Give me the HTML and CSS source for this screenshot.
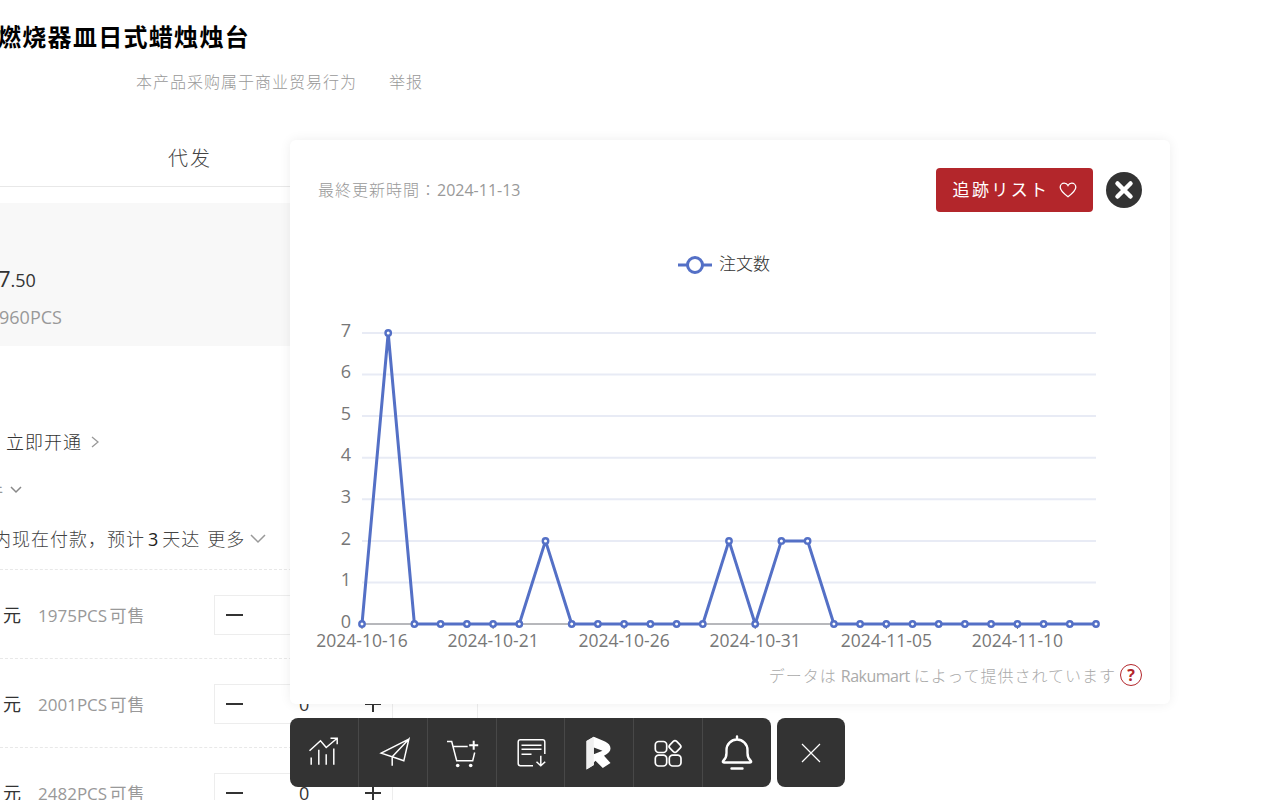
FILE: index.html
```html
<!DOCTYPE html>
<html lang="zh">
<head>
<meta charset="utf-8">
<title>商品详情</title>
<link rel="stylesheet" href="styles.css">
</head>
<body>
<main class="page">
  <h1 class="title">燃烧器皿日式蜡烛烛台</h1>
  <div class="meta"><span>本产品采购属于商业贸易行为</span><span>举报</span></div>
  <div class="tabs"><span>代发</span></div>
  <div class="price-panel">
    <div class="price">7<small>.50</small></div>
    <div class="moq">960PCS</div>
  </div>
  <div class="open-row"><span>立即开通</span><svg class="chev-r" viewBox="0 0 8 12"><path d="M1 1l6 5-6 5"/></svg></div>
  <div class="ship-row"><span class="ship-text">件</span><svg class="chev-d" viewBox="0 0 12 8"><path d="M1 1l5 5 5-5"/></svg></div>
  <div class="pay-row"><span>内现在付款，预计</span><span class="num">3</span><span>天达</span><span class="more">更多</span><svg class="chev-big" viewBox="0 0 16 10"><path d="M1 1l7 7 7-7"/></svg></div>
  <div class="sku-row">
    <span class="unit">元</span><span class="stock">1975PCS <i>可售</i></span>
    <div class="stepper"><span class="minus"></span><span class="qty">0</span><span class="plus"></span></div>
    <div class="cell"></div><div class="cell short"></div>
  </div>
  <div class="sku-row">
    <span class="unit">元</span><span class="stock">2001PCS <i>可售</i></span>
    <div class="stepper"><span class="minus"></span><span class="qty">0</span><span class="plus"></span></div>
    <div class="cell"></div><div class="cell short"></div>
  </div>
  <div class="sku-row">
    <span class="unit">元</span><span class="stock">2482PCS <i>可售</i></span>
    <div class="stepper"><span class="minus"></span><span class="qty">0</span><span class="plus"></span></div>
  </div>
</main>

<section class="modal" lang="ja">
  <header class="modal-head">
    <span class="updated"><i>最終更新時間：</i>2024-11-13</span>
    <button class="track"><span>追跡リスト</span><svg viewBox="0 0 18 16"><path d="M9 14.800C4 11 1.200 8.600 1.200 5.300 1.200 3 3 1.200 5.200 1.200 6.800 1.200 8.200 2 9 3.500 9.800 2 11.200 1.200 12.800 1.200 15 1.200 16.800 3 16.800 5.300 16.800 8.600 14 11 9 14.800Z"/></svg></button>
    <span class="close"><svg viewBox="0 0 36 36"><path d="M11.500 11.500l13 13M24.500 11.500l-13 13"/></svg></span>
  </header>
  <svg class="chart" viewBox="0 0 880 420">
    <path class="legend-line" d="M388 25h34"/>
    <circle class="legend-dot" cx="405" cy="25" r="7.500"/>
    <text x="429" y="30" class="legend-text">注文数</text>
    <path class="grid" d="M72 93H806M72 134.600H806M72 176.100H806M72 217.700H806M72 259.300H806M72 300.900H806M72 342.400H806"/>
    <path class="axis" d="M72 384H806M72 384v5M203.100 384v5M334.100 384v5M465.200 384v5M596.300 384v5M727.400 384v5"/>
    <g class="ylabels">
      <text x="61" y="97">7</text><text x="61" y="138">6</text><text x="61" y="180">5</text><text x="61" y="221">4</text><text x="61" y="263">3</text><text x="61" y="305">2</text><text x="61" y="346">1</text><text x="61" y="388">0</text>
    </g>
    <g class="xlabels">
      <text x="72" y="407">2024-10-16</text><text x="203.100" y="407">2024-10-21</text><text x="334.100" y="407">2024-10-26</text><text x="465.200" y="407">2024-10-31</text><text x="596.300" y="407">2024-11-05</text><text x="727.400" y="407">2024-11-10</text>
    </g>
    <polyline class="series" points="72,384 98.200,93 124.400,384 150.600,384 176.900,384 203.100,384 229.300,384 255.500,300.900 281.700,384 307.900,384 334.100,384 360.400,384 386.600,384 412.800,384 439,300.900 465.200,384 491.400,300.900 517.600,300.900 543.900,384 570.100,384 596.300,384 622.500,384 648.700,384 674.900,384 701.100,384 727.400,384 753.600,384 779.800,384 806,384"/>
    <g class="dots">
      <circle cx="72" cy="384" r="2.700"/><circle cx="98.200" cy="93" r="2.700"/><circle cx="124.400" cy="384" r="2.700"/><circle cx="150.600" cy="384" r="2.700"/><circle cx="176.900" cy="384" r="2.700"/><circle cx="203.100" cy="384" r="2.700"/><circle cx="229.300" cy="384" r="2.700"/><circle cx="255.500" cy="300.900" r="2.700"/><circle cx="281.700" cy="384" r="2.700"/><circle cx="307.900" cy="384" r="2.700"/><circle cx="334.100" cy="384" r="2.700"/><circle cx="360.400" cy="384" r="2.700"/><circle cx="386.600" cy="384" r="2.700"/><circle cx="412.800" cy="384" r="2.700"/><circle cx="439" cy="300.900" r="2.700"/><circle cx="465.200" cy="384" r="2.700"/><circle cx="491.400" cy="300.900" r="2.700"/><circle cx="517.600" cy="300.900" r="2.700"/><circle cx="543.900" cy="384" r="2.700"/><circle cx="570.100" cy="384" r="2.700"/><circle cx="596.300" cy="384" r="2.700"/><circle cx="622.500" cy="384" r="2.700"/><circle cx="648.700" cy="384" r="2.700"/><circle cx="674.900" cy="384" r="2.700"/><circle cx="701.100" cy="384" r="2.700"/><circle cx="727.400" cy="384" r="2.700"/><circle cx="753.600" cy="384" r="2.700"/><circle cx="779.800" cy="384" r="2.700"/><circle cx="806" cy="384" r="2.700"/>
    </g>
  </svg>
  <footer class="modal-foot"><span>データは<b>Rakumart</b>によって提供されています</span><span class="help">?</span></footer>
</section>

<nav class="dock">
  <div class="dock-main">
    <a class="dock-item"><svg viewBox="0 0 40 40"><path d="M5.500 17.800L16.500 7.800 22.200 14.500 33.200 5.200M26.500 5.200H33.200V11.200M7.200 24.500V31.800M14.800 16.800V31.800M22.200 21.200V31.800M29.800 15.500V31.800"/></svg></a>
    <a class="dock-item"><svg viewBox="0 0 40 40"><path d="M35.800 6.200L8.200 20.200 19.200 23.800V32.800M19.200 23.800L35.800 6.200 30.800 27.800 19.200 23.800"/></svg></a>
    <a class="dock-item"><svg viewBox="0 0 40 40"><path d="M5 8.500H9.700L14.700 27.800H30.700L32.700 19.500M10.700 13.500H25.700"/><path class="bold" d="M31.700 7.700V16.700M27.200 12.200H36.200"/><circle class="fill" cx="15.700" cy="32.500" r="1.800"/><circle class="fill" cx="28.700" cy="32.500" r="1.800"/></svg></a>
    <a class="dock-item"><svg viewBox="0 0 40 40"><path d="M33.800 21V9a2.200 2.200 0 0 0-2.200-2.200H9.400A2.200 2.200 0 0 0 7.200 9V30.600a2.200 2.200 0 0 0 2.200 2.200H22M10.500 12.200H30.500M10.500 16.200H30.500M10.500 21.200H20.500M29.800 22.800V32.800M25.500 28.800L29.800 32.800 34.200 28.800"/></svg></a>
    <a class="dock-item"><svg viewBox="0 0 40 40"><path class="logo" fill-rule="evenodd" d="M7.500 8L14.800 3.800 26 8.500Q31.500 11 31.500 15.500 31.500 19.500 25 22.800L31.500 30 23.800 35 16.500 27.800 14.800 29.500V32L7.500 36.500ZM14.800 14.500V21.200L23.500 17.800Z"/><path class="logo-side" d="M7.500 8L14.800 3.800V32L7.500 36.500Z"/></svg></a>
    <a class="dock-item"><svg class="apps" viewBox="0 0 40 40"><rect x="7.300" y="8.500" width="11.400" height="11" rx="3.400"/><rect x="22.200" y="8.700" width="9.600" height="9.600" rx="2.400" transform="rotate(45 27 13.500)"/><rect x="7.300" y="22.200" width="11.400" height="10.800" rx="3.400"/><rect x="21.300" y="22.200" width="11.700" height="10.800" rx="3.400"/></svg></a>
    <a class="dock-item"><svg class="bell" viewBox="0 0 40 40"><path d="M20 3.500V6.500M6.500 27.500C8.800 25.500 9.500 23 9.500 20V17A10.500 10.500 0 0 1 30.500 17V20C30.500 23 31.200 25.500 33.500 27.500Q35 29.500 33 29.500H7Q5 29.500 6.500 27.500ZM14.500 35.500H25.500"/></svg></a>
  </div>
  <a class="dock-close"><svg viewBox="0 0 20 20"><path d="M1 1L19 19M19 1L1 19"/></svg></a>
</nav>
</body>
</html>
```
FILE: styles.css
```css
html, body { margin: 0; padding: 0; }
body { width: 1280px; height: 800px; overflow: hidden; position: relative; background: #fff; font-family: "Open Sans", "Noto Sans CJK SC", sans-serif; color: #333; }
i { font-style: normal; }

.page { width: 546px; height: 800px; overflow: hidden; }
.title { margin: 20px 0 0 -3px; font-size: 24px; line-height: 34px; font-weight: 700; letter-spacing: 1.300px; color: #000; white-space: nowrap; }
.meta { margin: 16px 0 0 136px; display: flex; gap: 32px; font-size: 16px; line-height: 24px; letter-spacing: 1px; color: #999; font-weight: 300; }
.tabs { margin-top: 36px; height: 56px; line-height: 58px; padding-left: 168px; border-bottom: 1px solid #e8e8e8; font-size: 20px; letter-spacing: 2px; color: #444; font-weight: 300; }
.price-panel { margin-top: 16px; height: 143px; box-sizing: border-box; padding-top: 60px; background: #f8f8f8; }
.price { margin-left: -2px; font-size: 22px; line-height: 30px; color: #333; }
.price small { font-size: 18px; }
.moq { margin: 10px 0 0 -1px; font-size: 18px; line-height: 24px; color: #999; }
.open-row { margin: 84px 0 0 6px; display: flex; align-items: center; gap: 9px; font-size: 18px; line-height: 24px; letter-spacing: 1px; color: #333; font-weight: 300; }
.chev-r { width: 8px; height: 12px; fill: none; stroke: #999; stroke-width: 1.300; }
.ship-row { margin-top: 24px; height: 24px; display: flex; align-items: center; gap: 7px; font-size: 16px; color: #999; }
.ship-text { margin-left: -13px; }
.chev-d { width: 12px; height: 8px; fill: none; stroke: #888; stroke-width: 1.500; }
.pay-row { margin: 25px 0 0 -7px; display: flex; align-items: center; font-size: 18px; line-height: 24px; letter-spacing: 1px; color: #444; font-weight: 300; white-space: nowrap; }
.num { margin: 0 3px 0 3px; font-weight: 400; color: #222; }
.more { margin-left: 7px; }
.chev-big { width: 16px; height: 10px; margin-left: 5px; fill: none; stroke: #999; stroke-width: 1.500; }

.sku-row { display: flex; align-items: center; box-sizing: border-box; height: 89px; padding-top: 2px; border-top: 1px dashed #e8e8e8; }
.pay-row + .sku-row { margin-top: 18px; }
.unit { width: 38px; padding: 0 0 2px 3px; box-sizing: border-box; font-size: 18px; color: #333; flex: none; }
.stock { width: 176px; padding-bottom: 2px; flex: none; font-size: 17px; color: #999; white-space: nowrap; }
.stock i { letter-spacing: 1px; margin-left: -2px; }
.stepper { width: 179px; height: 40px; flex: none; box-sizing: border-box; border: 1px solid #ededed; display: flex; align-items: center; }
.minus { width: 17px; height: 2px; background: #333; margin-left: 11px; flex: none; }
.qty { width: 0; flex: none; margin-left: 56px; font-size: 18px; color: #333; }
.plus { width: 16px; height: 16px; margin-left: 66px; flex: none; background: linear-gradient(#333, #333) center / 16px 2px no-repeat, linear-gradient(#333, #333) center / 2px 16px no-repeat; }
.cell { width: 85px; height: 40px; flex: none; box-sizing: border-box; border-right: 1px solid #ededed; }
.cell.short { width: 69px; }

.modal { position: absolute; left: 290px; top: 140px; width: 880px; height: 564px; background: #fff; border-radius: 6px; box-shadow: 0 0 12px rgba(0, 0, 0, .07); font-family: "Open Sans", "Noto Sans CJK JP", sans-serif; }
.modal-head { display: flex; align-items: center; padding: 28px 28px 0; height: 44px; }
.updated { flex: 1; padding-bottom: 2px; font-size: 16px; color: #999; }
.updated i { letter-spacing: 1px; font-weight: 300; }
.track { width: 157px; height: 44px; border: 0; padding: 0 0 3px; border-radius: 4px; background: #b3262b; color: #fff; display: flex; align-items: center; justify-content: center; gap: 9px; font-family: inherit; font-size: 17px; letter-spacing: 2.400px; }
.track svg { width: 18px; height: 16px; margin-top: 3px; fill: none; stroke: #fff; stroke-width: 1.300; }
.close { width: 36px; height: 36px; margin-left: 13px; border-radius: 50%; background: #333; display: block; }
.close svg { display: block; width: 36px; height: 36px; fill: none; stroke: #fff; stroke-width: 4.500; stroke-linecap: round; }

.chart { display: block; width: 880px; height: 420px; margin-top: 28px; }
.legend-line { stroke: #5470c6; stroke-width: 3; fill: none; }
.legend-dot { fill: #fff; stroke: #5470c6; stroke-width: 3; }
.legend-text { font-size: 17px; fill: #333; font-weight: 300; }
.grid { stroke: #e8ebf5; stroke-width: 2; fill: none; }
.axis { stroke: #6e7079; stroke-width: 1; fill: none; }
.ylabels text { font-size: 18px; fill: #777; text-anchor: end; }
.xlabels text { font-size: 17.500px; fill: #777; text-anchor: middle; }
.series { fill: none; stroke: #5470c6; stroke-width: 3; stroke-linejoin: round; }
.dots circle { fill: #fff; stroke: #5470c6; stroke-width: 2.400; }

.modal-foot { display: flex; justify-content: flex-end; align-items: center; gap: 4px; padding: 0 28px; margin-top: 4px; height: 22px; font-size: 16px; letter-spacing: 1px; color: #aaa; font-weight: 300; }
.modal-foot b { font-weight: 400; letter-spacing: -0.500px; margin: 0 4px; }
.help { width: 20px; height: 20px; border: 1px solid #b3262b; border-radius: 50%; color: #b3262b; font-size: 16px; line-height: 20px; text-align: center; font-weight: 700; letter-spacing: 0; }

.dock { position: absolute; left: 290px; top: 718px; display: flex; gap: 6px; height: 69px; }
.dock-main { width: 481px; display: flex; background: #333; border-radius: 8px; overflow: hidden; }
.dock-item { flex: 1; display: flex; align-items: center; justify-content: center; border-right: 1px solid #484848; }
.dock-item:last-child { border-right: 0; }
.dock-item svg { width: 40px; height: 40px; fill: none; stroke: #fff; stroke-width: 1.500; }
.dock-item svg.bell { stroke-width: 2.400; stroke-linecap: round; }
.dock-item svg.apps { stroke-width: 1.700; }
.dock-item .bold { stroke-width: 2; }
.dock-item .fill { fill: #fff; stroke: none; }
.dock-item .logo { fill: #fff; stroke: none; }
.dock-item .logo-side { fill: #f0f0f0; stroke: none; }
.dock-close { width: 68px; background: #333; border-radius: 8px; display: flex; align-items: center; justify-content: center; }
.dock-close svg { width: 20px; height: 20px; fill: none; stroke: #fff; stroke-width: 1.200; }
```
